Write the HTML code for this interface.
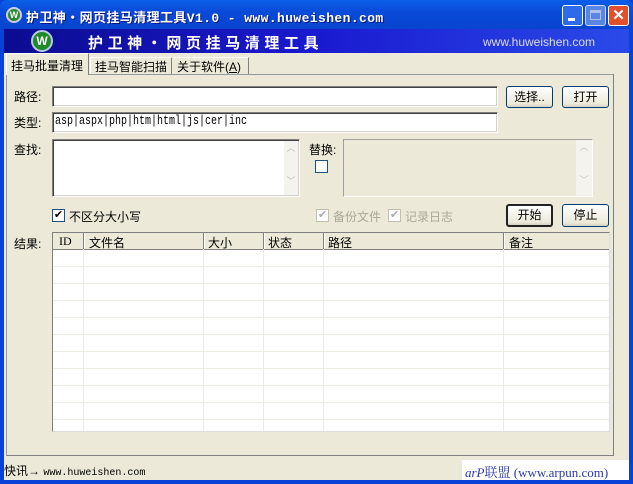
<!DOCTYPE html>
<html><head><meta charset="utf-8"><style>
*{box-sizing:border-box;margin:0;padding:0}
body{width:633px;height:484px;overflow:hidden;background:#0842d6;font-family:"Liberation Sans","Noto Sans CJK SC","WenQuanYi Zen Hei",sans-serif;font-size:12px;color:#000;position:relative}
.abs{position:absolute}
.title{left:0;top:0;width:633px;height:30px;background:linear-gradient(#0a5fe8,#0a4ad8 40%,#0844cf);border-radius:7px 7px 0 0}
.client{left:4px;top:29px;width:625px;height:451px;background:#ece9d8}
.banner{left:4px;top:29px;width:625px;height:24px;background:linear-gradient(90deg,#0c0c90,#1a1ad0 50%,#2a4ae8)}
.inp{background:#fff;border:1px solid;border-color:#808080 #fff #fff #808080;box-shadow:inset 1px 1px 0 #404040,inset -1px -1px 0 #d4d0c8}
.btn{border:1px solid #003c74;border-radius:3px;background:linear-gradient(#fff,#ece9d8 85%,#d6d0c5);text-align:center;line-height:20px;font-size:12px}
.cb{width:13px;height:13px;border:1px solid #1c5180;background:#fff;font-size:11px;line-height:11px;text-align:center}
.tb{width:21px;height:21px;border:1px solid #fff;border-radius:3px}
</style></head><body>
<div class="abs title"></div>
<div class="abs" style="left:6px;top:7px;width:16px;height:16px;border-radius:50%;background:#2a8a2a;border:2px solid #cce;color:#fff;font-size:9px;text-align:center;line-height:12px;font-weight:bold">W</div>
<div class="abs" style="left:26px;top:7px;color:#fff;font-weight:bold;font-size:13px;letter-spacing:0.4px;font-family:'Liberation Mono','Noto Sans CJK SC',monospace;text-shadow:1px 1px #0a1880">护卫神・网页挂马清理工具V1.0 - www.huweishen.com</div>
<div class="abs tb" style="left:562px;top:5px;background:#2f6ae8"><div style="margin:12px 0 0 5px;width:7px;height:3px;background:#fff"></div></div>
<div class="abs tb" style="left:585px;top:5px;background:#6f94e8;opacity:.8"><div style="margin:4px;width:11px;height:10px;border:1px solid #dde;border-top-width:3px"></div></div>
<div class="abs tb" style="left:608px;top:5px;background:#e0502c;color:#fff;font-weight:bold;text-align:center;line-height:19px;font-size:15px">✕</div>
<div class="abs client"></div>
<div class="abs banner"></div>
<div class="abs" style="left:31px;top:30px;width:22px;height:22px;border-radius:50%;background:#1f8a2a;border:2px solid #b8c8e0;color:#fff;font-weight:bold;font-size:12px;text-align:center;line-height:18px">W</div>
<div class="abs" style="left:88px;top:32px;color:#fff;font-weight:bold;font-size:15px;letter-spacing:4.6px">护卫神・网页挂马清理工具</div>
<div class="abs" style="left:483px;top:35px;color:#ddd;font-size:12px">www.huweishen.com</div>
<div class="abs" style="left:6px;top:74px;width:608px;height:382px;border:1px solid #919b9c;border-right-color:#808080;border-bottom-color:#808080"></div>
<div class="abs" style="left:6px;top:53px;width:83px;height:22px;background:#ece9d8;border:1px solid #fff;border-bottom:none;border-right:1px solid #808080;padding:3px 4px">挂马批量清理</div>
<div class="abs" style="left:90px;top:57px;width:82px;height:17px;border-right:1px solid #808080;border-left:1px solid #fff;border-top:1px solid #fff;padding:0 4px">挂马智能扫描</div>
<div class="abs" style="left:173px;top:57px;width:76px;height:17px;border-right:1px solid #808080;border-top:1px solid #fff;padding:0 4px">关于软件(<u>A</u>)</div>
<div class="abs" style="left:14px;top:88px">路径:</div>
<div class="abs inp" style="left:52px;top:86px;width:446px;height:21px"></div>
<div class="abs btn" style="left:506px;top:86px;width:47px;height:22px">选择..</div>
<div class="abs btn" style="left:562px;top:86px;width:47px;height:22px">打开</div>
<div class="abs" style="left:14px;top:114px">类型:</div>
<div class="abs inp" style="left:52px;top:112px;width:446px;height:21px;font-family:'Liberation Mono',monospace;font-size:10px;padding:3px 2px;transform-origin:0 0"><span style="display:inline-block;transform:scaleY(1.25);transform-origin:0 30%">asp|aspx|php|htm|html|js|cer|inc</span></div>
<div class="abs" style="left:14px;top:141px">查找:</div>
<div class="abs inp" style="left:52px;top:139px;width:248px;height:58px"></div>
<div class="abs" style="left:284px;top:141px;width:14px;height:54px;background:#f4f3ee;color:#c0c0c0;font-size:9px;text-align:center">︿<br><br><br>﹀</div>
<div class="abs" style="left:309px;top:141px">替换:</div>
<div class="abs cb" style="left:315px;top:160px;border-color:#1c5180"></div>
<div class="abs" style="left:343px;top:139px;width:250px;height:58px;border:1px solid;border-color:#a0a0a0 #fff #fff #a0a0a0;background:#ece9d8"></div>
<div class="abs" style="left:576px;top:140px;width:16px;height:56px;background:#f4f3ee;color:#c0c0c0;font-size:9px;text-align:center">︿<br><br><br>﹀</div>
<div class="abs cb" style="left:52px;top:209px">✔</div>
<div class="abs" style="left:69px;top:208px">不区分大小写</div>
<div class="abs cb" style="left:316px;top:209px;border-color:#c0c0b0;color:#aaa">✔</div>
<div class="abs" style="left:333px;top:208px;color:#aca899">备份文件</div>
<div class="abs cb" style="left:388px;top:209px;border-color:#c0c0b0;color:#aaa">✔</div>
<div class="abs" style="left:405px;top:208px;color:#aca899">记录日志</div>
<div class="abs btn" style="left:506px;top:204px;width:47px;height:23px;border:2px solid #222;line-height:19px">开始</div>
<div class="abs btn" style="left:562px;top:204px;width:47px;height:23px">停止</div>
<div class="abs" style="left:14px;top:235px">结果:</div>
<div class="abs" style="left:52px;top:232px;width:558px;height:200px;background:#fff;border:1px solid #7f7f7f;border-right-color:#ddd;border-bottom-color:#ddd;overflow:hidden">
<svg width="558" height="200" style="position:absolute;left:0;top:0">
<rect x="0" y="0" width="558" height="16" fill="#ece9d8"/>
<line x1="0" y1="16.5" x2="558" y2="16.5" stroke="#808080"/>
<g stroke="#eeede5">
<line x1="0" y1="33.5" x2="558" y2="33.5"/><line x1="0" y1="50.5" x2="558" y2="50.5"/><line x1="0" y1="67.5" x2="558" y2="67.5"/><line x1="0" y1="84.5" x2="558" y2="84.5"/><line x1="0" y1="101.5" x2="558" y2="101.5"/><line x1="0" y1="118.5" x2="558" y2="118.5"/><line x1="0" y1="135.5" x2="558" y2="135.5"/><line x1="0" y1="152.5" x2="558" y2="152.5"/><line x1="0" y1="169.5" x2="558" y2="169.5"/><line x1="0" y1="186.5" x2="558" y2="186.5"/>
<line x1="30.5" y1="16" x2="30.5" y2="200"/><line x1="150.5" y1="16" x2="150.5" y2="200"/><line x1="210.5" y1="16" x2="210.5" y2="200"/><line x1="270.5" y1="16" x2="270.5" y2="200"/><line x1="450.5" y1="16" x2="450.5" y2="200"/>
</g>
<g stroke="#808080"><line x1="30.5" y1="0" x2="30.5" y2="16"/><line x1="150.5" y1="0" x2="150.5" y2="16"/><line x1="210.5" y1="0" x2="210.5" y2="16"/><line x1="270.5" y1="0" x2="270.5" y2="16"/><line x1="450.5" y1="0" x2="450.5" y2="16"/></g>
<g stroke="#fff"><line x1="31.5" y1="0" x2="31.5" y2="16"/><line x1="151.5" y1="0" x2="151.5" y2="16"/><line x1="211.5" y1="0" x2="211.5" y2="16"/><line x1="271.5" y1="0" x2="271.5" y2="16"/><line x1="451.5" y1="0" x2="451.5" y2="16"/></g>
</svg>
<div class="abs" style="left:6px;top:1px;font-family:'Liberation Serif',serif">ID</div>
<div class="abs" style="left:36px;top:1px">文件名</div>
<div class="abs" style="left:155px;top:1px">大小</div>
<div class="abs" style="left:215px;top:1px">状态</div>
<div class="abs" style="left:275px;top:1px">路径</div>
<div class="abs" style="left:456px;top:1px">备注</div>
</div>
<div class="abs" style="left:4px;top:462px">快讯→ <span style="font-family:'Liberation Mono',monospace;font-size:10px">www.huweishen.com</span></div>
<div class="abs" style="left:462px;top:460px;width:167px;height:20px;background:#fff;color:#2a3aa8;font-family:'Liberation Serif','Noto Serif CJK SC',serif;font-size:13px;padding:2px 3px"><i>arP</i>联盟 (www.arpun.com)</div>
</body></html>
